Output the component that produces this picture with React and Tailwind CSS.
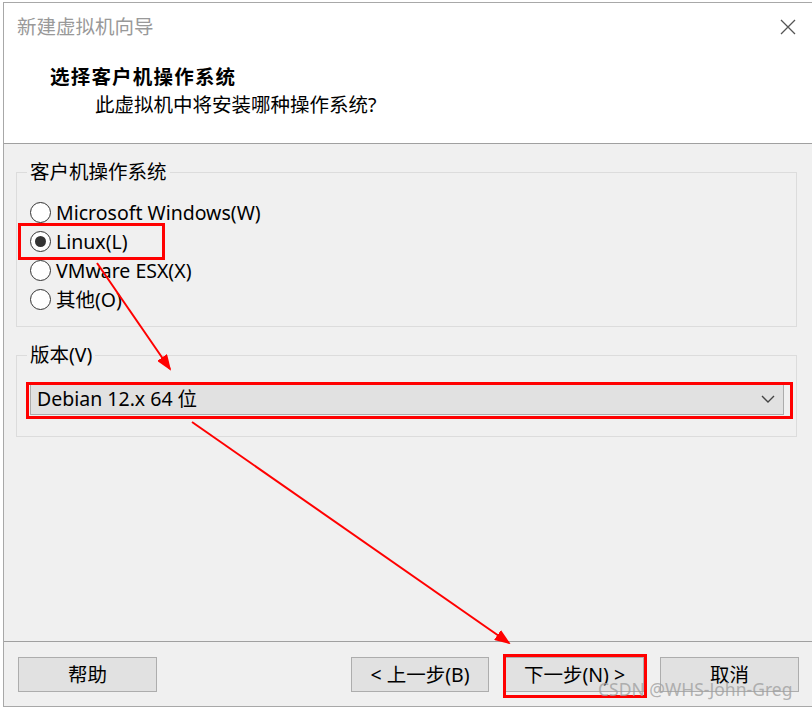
import React from "react";

const font = { fontFamily: '"Noto Sans", "Noto Sans CJK SC", sans-serif' };

const options = [
  { label: "Microsoft Windows(W)", checked: false },
  { label: "Linux(L)", checked: true },
  { label: "VMware ESX(X)", checked: false },
  { label: "其他(O)", checked: false },
];

const Radio = ({ label, checked }) => (
  <div className="flex items-center h-[29px]">
    <span className="w-[21px] h-[21px] rounded-full border border-[#333] bg-white flex items-center justify-center ml-[13px]">
      {checked && <span className="w-[11px] h-[11px] rounded-full bg-[#333]" />}
    </span>
    <span className="ml-[5px] text-[19.5px] leading-[24px] text-black">{label}</span>
  </div>
);

const WinButton = ({ children, className = "" }) => (
  <button className={`h-[35px] bg-[#e1e1e1] border border-[#adadad] text-[19.5px] text-black flex items-center justify-center ${className}`}>
    {children}
  </button>
);

export default function App() {
  return (
    <div className="w-[812px] h-[707px] bg-white relative overflow-hidden pl-[3px] pt-[2px] text-black" style={font}>
      <div className="w-[809px] h-[705px] border-l border-t border-b border-[#a8a8a8] flex flex-col">
        {/* Header */}
        <div className="h-[141px] bg-white border-b border-[#a0a0a0] shrink-0">
          <div className="h-[48px] flex items-center justify-between pl-[13px] pr-[16px]">
            <span className="text-[19.5px] text-[#999]">新建虚拟机向导</span>
            <svg width="16" height="16" viewBox="0 0 16 16">
              <path d="M1 1 L15 15 M15 1 L1 15" stroke="#555" strokeWidth="1.3" fill="none" />
            </svg>
          </div>
          <div className="mt-[13px] pl-[46px] text-[19.5px] leading-[26px] font-bold tracking-[1.2px]">选择客户机操作系统</div>
          <div className="mt-[2px] pl-[91px] text-[19.5px] leading-[26px]">此虚拟机中将安装哪种操作系统?</div>
        </div>

        {/* Body */}
        <div className="flex-1 bg-[#f0f0f0] pt-[16px] pl-[12px] pr-[15px]">
          <fieldset className="border border-[#dcdcdc] pb-[12px]">
            <legend className="ml-[10px] px-[3px] text-[19.5px] leading-[24px]">客户机操作系统</legend>
            <div className="pt-[14px]">
              {options.map((o) => (
                <Radio key={o.label} {...o} />
              ))}
            </div>
          </fieldset>

          <fieldset className="mt-[16px] border border-[#dcdcdc] pb-[21px]">
            <legend className="ml-[10px] px-[3px] text-[19.5px] leading-[24px]">版本(V)</legend>
            <div className="pt-[15px] pl-[13px] pr-[12px]">
              <div className="h-[33px] bg-[#e1e1e1] border border-[#acacac] flex items-center justify-between pl-[6px] pr-[8px]">
                <span className="text-[19.5px]">Debian 12.x 64 位</span>
                <svg width="14" height="8" viewBox="0 0 14 8">
                  <path d="M1 1 L7 7 L13 1" stroke="#444" strokeWidth="1.4" fill="none" />
                </svg>
              </div>
            </div>
          </fieldset>
        </div>

        {/* Footer */}
        <div className="h-[65px] shrink-0 bg-[#f0f0f0] border-t border-[#a0a0a0] flex items-start pt-[15px] pl-[14px] pr-[13px]">
          <WinButton className="w-[139px]">帮助</WinButton>
          <div className="flex-1" />
          <WinButton className="w-[138px]">&lt; 上一步(B)</WinButton>
          <WinButton className="w-[139px] ml-[16px]">下一步(N) &gt;</WinButton>
          <WinButton className="w-[139px] ml-[16px]">取消</WinButton>
        </div>
      </div>

      {/* Annotations */}
      <div className="absolute left-[18px] top-[223px] w-[147px] h-[37px] border-[3px] border-[#ff0000]" />
      <div className="absolute left-[26px] top-[382px] w-[767px] h-[37px] border-[3px] border-[#ff0000]" />
      <div className="absolute left-[503px] top-[654px] w-[144px] h-[44px] border-[3px] border-[#ff0000]" />
      <svg className="absolute left-0 top-0" width="812" height="707" viewBox="0 0 812 707">
        <defs>
          <marker id="ah" markerWidth="8" markerHeight="6" refX="7" refY="3" orient="auto" markerUnits="strokeWidth">
            <path d="M0 0 L8 3 L0 6 Z" fill="#ff0000" />
          </marker>
        </defs>
        <line x1="97" y1="263" x2="170" y2="369" stroke="#ff0000" strokeWidth="2" markerEnd="url(#ah)" />
        <line x1="192" y1="422" x2="509" y2="643" stroke="#ff0000" strokeWidth="2" markerEnd="url(#ah)" />
      </svg>
      <span className="absolute left-[598px] top-[677px] text-[17.5px] leading-[24px] text-[#a0a0a0]/80">CSDN @WHS-John-Greg</span>
    </div>
  );
}
